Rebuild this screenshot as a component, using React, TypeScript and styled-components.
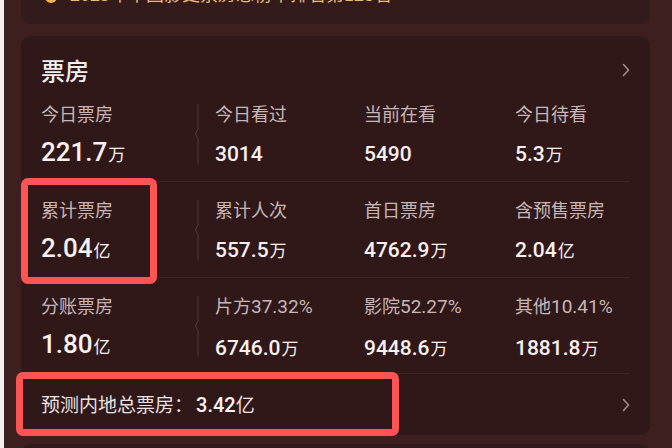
import styled, { createGlobalStyle } from "styled-components";

const cjk = `"Noto Sans CJK SC", "Noto Sans", sans-serif`;
const num = `Roboto, "Noto Sans CJK SC", sans-serif`;

const GlobalStyle = createGlobalStyle`
  body {
    margin: 0;
    background: #3d1f20;
    font-family: ${cjk};
  }
`;

type Stat = { label: string; labelNum?: string; value: string; unit?: string };

const rows: Stat[][] = [
  [
    { label: "今日票房", value: "221.7", unit: "万" },
    { label: "今日看过", value: "3014" },
    { label: "当前在看", value: "5490" },
    { label: "今日待看", value: "5.3", unit: "万" },
  ],
  [
    { label: "累计票房", value: "2.04", unit: "亿" },
    { label: "累计人次", value: "557.5", unit: "万" },
    { label: "首日票房", value: "4762.9", unit: "万" },
    { label: "含预售票房", value: "2.04", unit: "亿" },
  ],
  [
    { label: "分账票房", value: "1.80", unit: "亿" },
    { label: "片方", labelNum: "37.32%", value: "6746.0", unit: "万" },
    { label: "影院", labelNum: "52.27%", value: "9448.6", unit: "万" },
    { label: "其他", labelNum: "10.41%", value: "1881.8", unit: "万" },
  ],
];

const Chevron = () => (
  <ChevronIcon viewBox="0 0 8 14" width="8" height="14">
    <polyline points="1.5,1.5 6.5,7 1.5,12.5" />
  </ChevronIcon>
);

const Divider = () => (
  <DividerIcon viewBox="0 0 6 60" width="6" height="60">
    <path d="M4 0 V25 L1.5 30 L4 35 V60" />
  </DividerIcon>
);

const StatCell: React.FC<{ stat: Stat; first?: boolean }> = ({ stat, first }) => (
  <Cell $first={first}>
    <Label>
      {stat.label}
      {stat.labelNum && <LabelNum>{stat.labelNum}</LabelNum>}
    </Label>
    <Value>
      <Num $big={first}>{stat.value}</Num>
      {stat.unit && <Unit>{stat.unit}</Unit>}
    </Value>
  </Cell>
);

const App = () => {
  return (
    <Page>
      <GlobalStyle />
      <TopCard>
        <Coin />
        <TopText>2023年中国影史票房总榜单排名第128名</TopText>
      </TopCard>
      <Card>
        <Header>
          <Title>票房</Title>
          <Chevron />
        </Header>
        {rows.map((row, i) => (
          <Row key={i}>
            <StatCell stat={row[0]} first />
            <Divider />
            {row.slice(1).map((s) => (
              <StatCell key={s.label} stat={s} />
            ))}
          </Row>
        ))}
        <Forecast>
          <ForecastText>
            预测内地总票房：<ForecastNum>3.42</ForecastNum>亿
          </ForecastText>
          <Chevron />
        </Forecast>
        <Highlight $left={0} $top={142} $width={136} $height={106} />
        <Highlight $left={-5} $top={336} $width={383} $height={64} />
      </Card>
      <NextCard />
    </Page>
  );
};

export default App;

const Page = styled.div`
  height: 448px;
  overflow: hidden;
  border-left: 4px solid #f2f0f0;
  padding: 0 22px 0 17px;
  background: #3d1f20;
`;

const TopCard = styled.div`
  margin-top: -40px;
  height: 64px;
  box-sizing: border-box;
  display: flex;
  align-items: flex-end;
  gap: 13px;
  padding: 0 24px 19px;
  border-radius: 10px;
  background: #331a1b;
`;

const Coin = styled.div`
  width: 12px;
  height: 12px;
  margin-bottom: 2px;
  border-radius: 50%;
  background: #f0b552;
`;

const TopText = styled.span`
  color: #e9bd74;
  font-size: 18px;
  line-height: 24px;
`;

const Card = styled.div`
  position: relative;
  margin-top: 12px;
  padding: 0 20px;
  border-radius: 10px;
  background: #301819;
`;

const Header = styled.div`
  display: flex;
  align-items: center;
  justify-content: space-between;
  padding: 20px 0 2px;
`;

const Title = styled.h2`
  margin: 0;
  color: #f6efef;
  font-size: 24px;
  font-weight: 500;
  line-height: 28px;
`;

const ChevronIcon = styled.svg`
  fill: none;
  stroke: #a18b8b;
  stroke-width: 1.6;
  stroke-linecap: round;
  stroke-linejoin: round;
`;

const DividerIcon = styled.svg`
  align-self: center;
  fill: none;
  stroke: #573938;
  stroke-width: 1;
`;

const Row = styled.div`
  display: grid;
  grid-template-columns: 153px 6px 149px 151px 1fr;
  align-items: start;
  height: 96px;
  box-sizing: border-box;
  border-bottom: 1px solid rgba(255, 255, 255, 0.05);
`;

const Cell = styled.div<{ $first?: boolean }>`
  display: flex;
  flex-direction: column;
  gap: 13px;
  padding-top: 15px;
  padding-left: ${(p) => (p.$first ? "0" : "15px")};
`;

const Label = styled.div`
  display: flex;
  align-items: baseline;
  color: #c8b7b6;
  font-size: 18px;
  line-height: 24px;
  white-space: nowrap;
`;

const LabelNum = styled.span`
  font-family: ${num};
  font-size: 19px;
`;

const Value = styled.div`
  height: 32px;
  color: #f8f1f0;
  font-size: 17px;
  line-height: 32px;
  white-space: nowrap;
`;

const Num = styled.span<{ $big?: boolean }>`
  font-family: ${num};
  font-size: ${(p) => (p.$big ? "26px" : "21px")};
  font-weight: 500;
  line-height: 1;
`;

const Unit = styled.span`
  margin-left: 1px;
`;

const Forecast = styled.div`
  display: flex;
  align-items: center;
  justify-content: space-between;
  height: 61px;
`;

const ForecastText = styled.div`
  color: #ebe1e0;
  font-size: 19px;
  line-height: 24px;
`;

const ForecastNum = styled.span`
  margin-left: 3px;
  color: #fbf5f4;
  font-family: ${num};
  font-size: 20px;
  font-weight: 500;
`;

const Highlight = styled.div<{ $left: number; $top: number; $width: number; $height: number }>`
  position: absolute;
  left: ${(p) => p.$left}px;
  top: ${(p) => p.$top}px;
  width: ${(p) => p.$width}px;
  height: ${(p) => p.$height}px;
  box-sizing: border-box;
  border: 7px solid #fe5453;
  border-radius: 7px;
  pointer-events: none;
`;

const NextCard = styled.div`
  margin-top: 9px;
  height: 40px;
  border-radius: 10px;
  background: #301819;
`;
